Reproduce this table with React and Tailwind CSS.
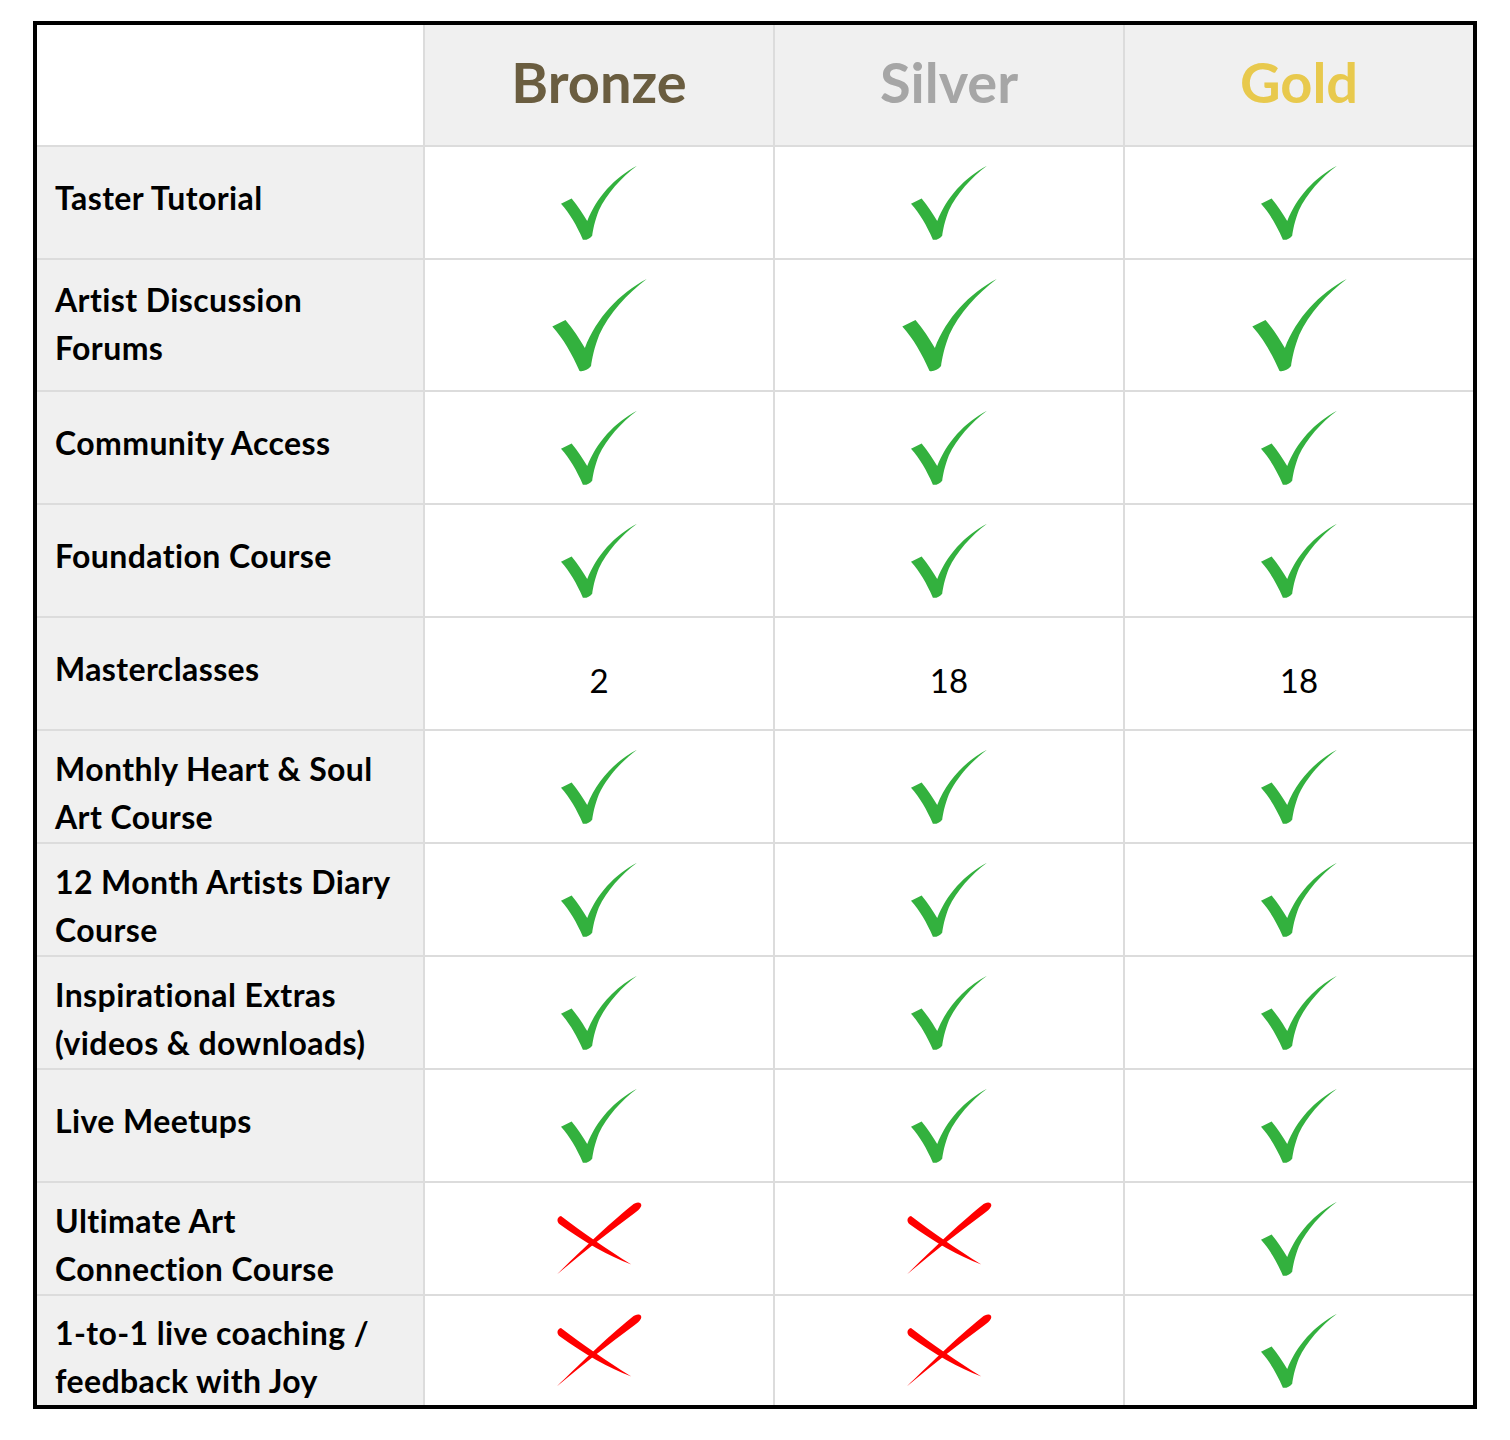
const rows = [
  { label: ["Taster Tutorial"], cells: ["check", "check", "check"] },
  { label: ["Artist Discussion", "Forums"], cells: ["big", "big", "big"], tall: true },
  { label: ["Community Access"], cells: ["check", "check", "check"] },
  { label: ["Foundation Course"], cells: ["check", "check", "check"] },
  { label: ["Masterclasses"], cells: ["2", "18", "18"] },
  { label: ["Monthly Heart & Soul", "Art Course"], cells: ["check", "check", "check"] },
  { label: ["12 Month Artists Diary", "Course"], cells: ["check", "check", "check"] },
  { label: ["Inspirational Extras", "(videos & downloads)"], cells: ["check", "check", "check"] },
  { label: ["Live Meetups"], cells: ["check", "check", "check"] },
  { label: ["Ultimate Art", "Connection Course"], cells: ["cross", "cross", "check"] },
  { label: ["1-to-1 live coaching /", "feedback with Joy"], cells: ["cross", "cross", "check"], last: true },
];

function Check({ big }) {
  return (
    <svg
      viewBox="110 40 245 235"
      className={big ? "w-[101px] h-[97px]" : "w-[82px] h-[78px]"}
    >
      <path
        d="M118,160 L150,144 C168,165 184,190 197,212 C225,140 280,80 347,45 C300,80 255,130 232,180 C220,210 214,240 212,256 C205,266 192,270 184,268 C165,225 145,190 118,160 Z"
        fill="#33b13e"
      />
    </svg>
  );
}

function Cross() {
  return (
    <svg viewBox="100 45 265 230" className="w-[88px] h-[77px]">
      <path
        d="M106,268 C160,215 255,122 332,60 C346,47 364,50 359,64 C355,73 347,78 339,84 C260,142 180,206 106,268 Z"
        fill="#ff0000"
      />
      <path
        d="M118,92 C180,140 260,195 330,238 C260,212 190,172 115,118 C104,110 105,95 118,92 Z"
        fill="#ff0000"
      />
    </svg>
  );
}

function Cell({ value }) {
  if (value === "check") return <Check />;
  if (value === "big") return <Check big />;
  if (value === "cross") return <Cross />;
  return <span className="pt-[14px] text-[33px] text-black">{value}</span>;
}

export default function App() {
  return (
    <div className="bg-white min-h-[1440px] pt-[21px] pl-[33px] font-[Lato,sans-serif]">
      <div className="w-[1444px] border-4 border-black bg-[#dcdcdc]">
        <div className="grid grid-cols-[386px_348px_348px_348px] gap-[2px]">
          {/* HEADER */}
          <div className="bg-white h-[120px]" />
          <div className="bg-[#f0f0f0] h-[120px] flex items-center justify-center pb-[6px] text-[56px] font-bold text-[#6a5d40]">
            Bronze
          </div>
          <div className="bg-[#f0f0f0] h-[120px] flex items-center justify-center pb-[6px] text-[56px] font-bold text-[#a6a6a6]">
            Silver
          </div>
          <div className="bg-[#f0f0f0] h-[120px] flex items-center justify-center pb-[6px] text-[56px] font-bold text-[#e8c94d]">
            Gold
          </div>

          {/* BODY */}
          {rows.map((row, i) => {
            const h = row.tall ? "h-[130px]" : row.last ? "h-[109px]" : "h-[111px]";
            const two = row.label.length > 1;
            const pad = row.tall ? "pb-[2px]" : two ? "pt-[12px]" : "pb-[10px]";
            return [
              <div
                key={`l${i}`}
                className={`${h} ${pad} bg-[#f0f0f0] flex flex-col justify-center pl-[18px] text-[32px] tracking-[0.4px] leading-[48px] font-bold text-black`}
              >
                {row.label.map((line) => (
                  <span key={line}>{line}</span>
                ))}
              </div>,
              ...row.cells.map((c, j) => (
                <div key={`c${i}${j}`} className={`${h} bg-white flex items-center justify-center`}>
                  <Cell value={c} />
                </div>
              )),
            ];
          })}
        </div>
      </div>
    </div>
  );
}
